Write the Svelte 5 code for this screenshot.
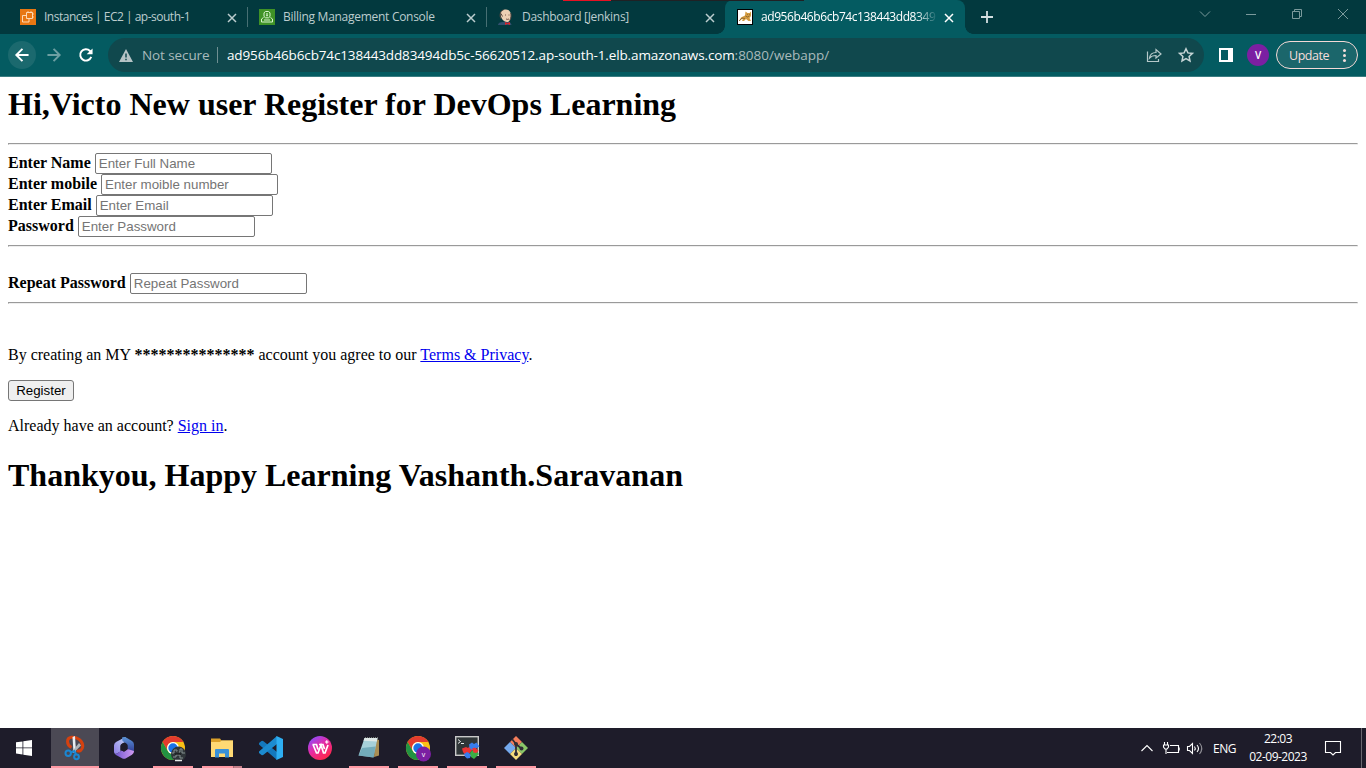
<script>
  const tabs = [
    { id: 'ec2', title: 'Instances | EC2 | ap-south-1', ls: -0.5 },
    { id: 'billing', title: 'Billing Management Console', ls: -0.28 },
    { id: 'jenkins', title: 'Dashboard [Jenkins]', ls: -0.3 },
    { id: 'tomcat', title: 'ad956b46b6cb74c138443dd8349', ls: -0.42, active: true }
  ];
  const fields = [
    { label: 'Enter Name', hint: 'Enter Full Name' },
    { label: 'Enter mobile', hint: 'Enter moible number' },
    { label: 'Enter Email', hint: 'Enter Email' },
    { label: 'Password', hint: 'Enter Password' }
  ];
  const apps = [
    { id: 'snip', open: true, current: true },
    { id: 'm365' },
    { id: 'chrome', open: true },
    { id: 'files', open: true, multi: true },
    { id: 'code' },
    { id: 'wps' },
    { id: 'notepad', open: true },
    { id: 'chromev', open: true },
    { id: 'moba', open: true },
    { id: 'git', open: true }
  ];
</script>

{#snippet chromeLogo()}
  <circle cx="12" cy="12" r="12" fill="#fbc116" />
  <path d="M1.6 6A12 12 0 0 1 22.4 6H12a6 6 0 0 0-5.2 9Z" fill="#e33b2e" />
  <path d="M1.6 6A12 12 0 0 0 12 24l5.2-9A6 6 0 0 1 6.8 15Z" fill="#229342" />
  <circle cx="12" cy="12" r="6" fill="#fff" />
  <circle cx="12" cy="12" r="4.7" fill="#1a73e8" />
{/snippet}

<div class="screen">
  <div class="strip">
    <div class="accent"><i></i><b></b></div>
    {#each tabs as tab, i}
      <div class="tab" class:active={tab.active} class:ruled={i < 2}>
        <svg class="fav" viewBox="0 0 16 16">
          {#if tab.id === 'ec2'}
            <rect width="16" height="16" fill="#e87712" />
            <path d="M6.500 3.500h6v6h-6zM8 2.200v1.300M11 2.200v1.300M12.500 5h1.300M12.500 8h1.300M6.500 6.500h-4v6.500h6.500v-3.500" fill="none" stroke="#ffe3c4" stroke-width=".9" />
          {:else if tab.id === 'billing'}
            <rect width="16" height="16" fill="#3f9226" />
            <path d="M5 7.500V3.800L6.500 2.500h3L11 3.800v3.700l-1.500 1.300h-3zM4.500 8.500L2.500 10v3h11v-3l-2-1.500M5 11h6" fill="none" stroke="#d9f5cf" stroke-width="1" />
            <path d="M8 4v3.500M7 5h2M7 6.500h2" fill="none" stroke="#d9f5cf" stroke-width=".7" />
          {:else if tab.id === 'jenkins'}
            <path d="M0 16c.2-2 2-3 5-3l4-.5c3 0 4 1.500 4.500 3.500z" fill="#31506f" />
            <path d="M2.500 5C2.500 2 5 .5 8 .5S13 3 13 6s-1 7-4 7-6-3-6.500-8z" fill="#edcfb4" />
            <path d="M3.500 10C1.300 8.500 1.500 2 5.500 .8M3 4.500l1.500 3M12.700 4c.6 2.500.3 5-.7 7" fill="none" stroke="#5c4a42" stroke-width="1" />
            <path d="M7 6h1M10.500 6h1M8 10q1.500 .8 3 0" stroke="#58372e" fill="none" stroke-width=".8" />
            <path d="M7 13l2.300 .9L12 13v3l-2.700-1L7 16z" fill="#d3242c" />
          {:else}
            <rect x=".5" y=".5" width="15" height="15" fill="#fff" stroke="#000" />
            <path d="M2 12l2-3.500L8 6.500l.5-4L10.500 4h2L14 2.500V7l-1.500 2 1.500 3h-2.500L9 10l-2 2H5l1-2-2 .5L3 12z" fill="#d39b3f" />
            <path d="M8.500 7l2 1 2-1M10 5.500h.8M12.300 5.500h.8M2 12l3-3 3 .5" fill="none" stroke="#75572d" stroke-width=".7" />
          {/if}
        </svg>
        <span class="title" style="letter-spacing:{tab.ls}px">{tab.title}</span>
        <svg class="x" viewBox="0 0 10 10"><path d="M1 1l8 8M9 1l-8 8" /></svg>
      </div>
    {/each}
    <svg class="plus" viewBox="0 0 12 12"><path d="M6 0v12M0 6h12" /></svg>
    <div class="winctl">
      <svg viewBox="0 0 12 12"><path d="M1 3.500l5 5 5-5" /></svg>
      <svg viewBox="0 0 12 12"><path d="M1 6.500h10" /></svg>
      <svg viewBox="0 0 12 12"><path d="M1.500 3.500h7v7h-7zM3.500 3.500v-2h7v7h-2" /></svg>
      <svg viewBox="0 0 12 12"><path d="M1 1l10 10M11 1L1 11" /></svg>
    </div>
  </div>

  <div class="toolbar">
    <div class="navbtn lit"><svg viewBox="0 0 16 16"><path d="M15.500 8H2M8.500 1L1.500 8l7 7" /></svg></div>
    <div class="navbtn dim"><svg viewBox="0 0 16 16"><path d="M.5 8H14M7.500 1l7 7-7 7" /></svg></div>
    <div class="navbtn"><svg viewBox="0 0 16 16"><path d="M14 10.200A6.500 6.500 0 1 1 12.600 3.400L14 5" /><path d="M15.500 .5v6.700H8.800z" class="solid" /></svg></div>
    <div class="omnibox">
      <svg class="warn" viewBox="0 0 14 13"><path d="M7 0l7 13H0z" fill="#b5c3c5" /><path d="M7 4.500v4M7 9.700v1.500" stroke="#10484d" stroke-width="1.500" /></svg>
      <span class="secure">Not secure</span>
      <i class="bar"></i>
      <span class="url"><span class="host">ad956b46b6cb74c138443dd83494db5c-56620512.ap-south-1.elb.amazonaws.com</span><span class="path">:8080/webapp/</span></span>
      <svg class="share" viewBox="0 0 16 16"><path d="M1.500 4.500v10h11V12M3.500 11C4 7.500 6.500 5.500 10 5.500V2.500L15 7l-5 4V8.500c-3 0-5 .8-6.500 2.500z" /></svg>
      <svg class="star" viewBox="0 0 16 16"><path d="M8 1.700l1.900 4.200 4.600.5-3.400 3.100.9 4.500-4-2.300L4 14l.9-4.500L1.500 6.400l4.600-.5z" /></svg>
    </div>
    <svg class="panel" viewBox="0 0 14 14"><path d="M0 0h14v14H0zM2 2v10h7V2z" fill="#fff" fill-rule="evenodd" /></svg>
    <div class="avatar">V</div>
    <div class="update"><span>Update</span><i></i></div>
  </div>

  <main>
    <h1 class="first">Hi,Victo New user Register for DevOps Learning</h1>
    <hr />
    {#each fields as f}
      <div class="field"><label for={f.hint}>{f.label}</label><input id={f.hint} placeholder={f.hint} /></div>
    {/each}
    <hr />
    <br />
    <div class="field"><label for="again">Repeat Password</label><input id="again" placeholder="Repeat Password" /></div>
    <hr />
    <br />
    <p class="terms">By creating an MY <b>***************</b> account you agree to our <a href="#terms">Terms &amp; Privacy</a>.</p>
    <button>Register</button>
    <p class="signin">Already have an account? <a href="#signin">Sign in</a>.</p>
    <h1 class="last">Thankyou, Happy Learning Vashanth.Saravanan</h1>
  </main>

  <footer>
    <div class="start"><svg viewBox="0 0 16 16"><path d="M0 2.300l6.500-.9v6.100H0zM7.300 1.300L16 0v7.500H7.300zM0 8.300h6.500v6.200L0 13.600zM7.300 8.300H16V16l-8.700-1.300z" fill="#fff" /></svg></div>
    {#each apps as app}
      <div class="app" class:open={app.open} class:current={app.current} class:multi={app.multi}>
        <svg viewBox="0 0 24 24">
          {#if app.id === 'snip'}
            <path d="M8.500 11.500C3.500 9 3 2 8.500 1.300c6-.8 11.500 4 11.300 9 -.2 4-3.500 5.500-6 4.200" fill="none" stroke="#d4410f" stroke-width="3" />
            <path d="M9.500 1l2.500-1 1 15.500-2.500 1.500z" fill="#e9eef2" />
            <path d="M16 7l2 2.500-7.500 7.500-1-2z" fill="#aeb4b9" />
            <circle cx="5.200" cy="17.300" r="2.700" fill="none" stroke="#1b87d2" stroke-width="2" />
            <circle cx="13.500" cy="20.800" r="2.400" fill="none" stroke="#1b87d2" stroke-width="2" />
            <path d="M7.500 16.500l4-1.500 1.500 3.500" fill="none" stroke="#1b87d2" stroke-width="2" />
          {:else if app.id === 'm365'}
            <defs>
              <linearGradient id="ma" x1="0" y1="1" x2="1" y2="0"><stop stop-color="#8f7ee8" /><stop offset="1" stop-color="#c3d6f5" /></linearGradient>
              <linearGradient id="mb" x1="0" y1="0" x2="0" y2="1"><stop stop-color="#5a93d8" /><stop offset="1" stop-color="#313a92" /></linearGradient>
              <linearGradient id="mc" x1="0" y1="0" x2="1" y2="0"><stop stop-color="#6c55cf" /><stop offset="1" stop-color="#d29af0" /></linearGradient>
            </defs>
            <path d="M13.500 1L4 6Q2 7.200 2 9.500V16q0 2 2 2l4.500-2.500V10q0-1.500 1.500-2.300L14 5.500z" fill="url(#ma)" />
            <path d="M10 1.500q2.500-1 5 .5l5 3q2 1.200 2 3.500v8L15.500 13V9.500q0-1.500-1.500-2.300L10.500 5z" fill="url(#mb)" />
            <path d="M2.500 17.500q1 1 2.500 0l4.500-3 2.500 1 3.500-2.500 6.500 2q0 2.500-2 3.700l-6 3.500q-2 1.200-4 0l-6-3.200z" fill="url(#mc)" />
            <path d="M8.500 10q0-1.500 1.500-2.300L12 6.700l2.500 1.300q1 .7 1 2v3.500L12 15.700l-3.500-1.900z" fill="#1e1c2a" />
          {:else if app.id === 'chrome'}
            {@render chromeLogo()}
            <circle cx="17.500" cy="18" r="7.500" fill="#30363a" />
            <path d="M11 17h2v-3h3v2h3v-3h2v4h3M12 21h3v-2h4v3h3" fill="none" stroke="#84908f" stroke-width="1" />
            <path d="M14 18h6M17 15v2" fill="none" stroke="#111" />
            <path d="M14 24.500h7" stroke="#e4e7e7" stroke-width="1.500" />
          {:else if app.id === 'files'}
            <path d="M1 2.500h9l1.500 2H23V21H1z" fill="#dca12a" />
            <path d="M1 6h9l1.500-1.500H23V21H1z" fill="#ffd974" />
            <path d="M5 21.500V14q0-1 1-1h12q1 0 1 1v7.500h-4V17.500H9v4z" fill="#3a91d8" />
          {:else if app.id === 'code'}
            <path d="M0 7l2.500-2Q3.500 4.500 4.500 5.300L18 16v8L0 8.500z" fill="#1478bd" />
            <path d="M0 17l2.500 2q1 .5 2-.3L18 8V0L0 15.500z" fill="#1c8bd0" />
            <path d="M17.500 0L24 3v18l-6.500 3z" fill="#2eaef2" />
          {:else if app.id === 'wps'}
            <defs><linearGradient id="wpsg" x1="0" y1="0" x2=".7" y2="1"><stop offset=".1" stop-color="#8c4dff" /><stop offset=".5" stop-color="#e42aa7" /><stop offset="1" stop-color="#ff2747" /></linearGradient></defs>
            <circle cx="12" cy="12" r="12" fill="url(#wpsg)" />
            <path d="M4.500 8.500h4l1.500 5M5 8.500l3.500 8.500h1.500L13 9l2.500 8H17l3-8M11 8.500h4l1.500 4.500" fill="none" stroke="#fff" stroke-width="1.700" />
            <path d="M17 6h3.600M18.800 4.200v3.600" fill="none" stroke="#fff" stroke-width="1.200" />
          {:else if app.id === 'notepad'}
            <path d="M18 3l4 1v15.500l-5 1.500z" fill="#a98e54" />
            <path d="M7.500 2h13l-4 19.500L1.500 19.500z" fill="#a7d1da" />
            <path d="M7.500 2h13l-.7 3.500-13.300-.7z" fill="#dfe9e8" />
            <path d="M5 12l13.500-1.500-2 11L1.500 19.500z" fill="#5798ab" opacity=".65" />
            <path d="M8 1.500h13" stroke="#747977" stroke-dasharray="1 1" />
          {:else if app.id === 'chromev'}
            {@render chromeLogo()}
            <circle cx="17.500" cy="18" r="7.500" fill="#7b1fa2" />
            <text x="17.500" y="20.500" text-anchor="middle" font-size="7" fill="#fff" font-family="Open Sans, sans-serif">v</text>
          {:else if app.id === 'moba'}
            <rect x=".7" y=".7" width="22.600" height="18.600" fill="#303638" stroke="#c8c8c8" stroke-width="1.400" />
            <path d="M3 3.500L5.500 5.500 3 7.500M6 7.500h3" fill="none" stroke="#fff" stroke-width=".9" />
            <path d="M7 12.500l4-1.500 2 1 2-2 3 3-4 5-4 1-2-3z" fill="#ee3434" />
            <path d="M14 8.500l3-2 2 1.500 2.500-1.500 3 4-3.500 2-1 2-3-.5-2.500-2z" fill="#387ded" />
            <path d="M9 18l3-2 2 1 2 2-1 3-3 .5-2-2z" fill="#387ded" />
            <path d="M15 17l2-2.500 3-.5 4 4-2.500 2.500-2.500 2.500-3-2z" fill="#3bae45" />
            <path d="M17 12.500l3-1 3.500 3-2 2.500-3-.5z" fill="#ee3434" />
          {:else}
            <path d="M12 0l6 6-6 6-6-6z" fill="#f47d5b" />
            <path d="M6 6l6 6-6 6-6-6z" fill="#74a9ee" />
            <path d="M18 6l6 6-6 6-6-6z" fill="#8ac668" />
            <path d="M12 12l6 6-6 6-6-6z" fill="#f5dc7c" />
            <path d="M8 3l4 5v12M12 8l6 5" fill="none" stroke="#302d36" stroke-width="1.800" />
            <circle cx="12" cy="8" r="2" fill="#302d36" /><circle cx="12" cy="18" r="2" fill="#302d36" /><circle cx="17.500" cy="12.500" r="2" fill="#302d36" />
          {/if}
        </svg>
      </div>
    {/each}
    <div class="tray">
      <svg class="caret" viewBox="0 0 12 8"><path d="M.5 7L6 1.500 11.500 7" /></svg>
      <svg class="batt" viewBox="0 0 17 13"><path d="M7 3.500h8.500v7H4M16.200 5.500v3M1.500 0v3M4.500 0v3M.5 3h5v2l-1.500 2H2L.5 5zM3 7v5" /></svg>
      <svg class="vol" viewBox="0 0 17 13"><path d="M.5 4.500h2l3-3v10l-3-3h-2zM7.500 4.500q1.500 2 0 4M10 3q3 3.500 0 7" /><path d="M12.500 1q4.500 5.500 0 11" opacity=".5" /></svg>
      <span class="lang">ENG</span>
      <div class="clock"><span>22:03</span><span>02-09-2023</span></div>
      <svg class="note" viewBox="0 0 16 16"><path d="M.5 1.500h15v11h-5L8 15l-2.500-2.500h-5z" /></svg>
      <i class="desk"></i>
    </div>
  </footer>
</div>

<style>
  :global(body) { margin: 0; overflow: hidden; background: #fff; }
  .screen { width: 1366px; height: 768px; display: flex; flex-direction: column; background: #fff; overflow: hidden; font-family: "Open Sans", sans-serif; }
  svg { display: block; flex: none; overflow: visible; }

  .strip { position: relative; height: 34px; flex: none; display: flex; background: #02393e; padding-left: 9px; box-sizing: border-box; }
  .accent { position: absolute; left: 563px; top: 0; display: flex; z-index: 2; height: 1px; }
  .accent i { width: 48px; background: #e81123; }
  .accent b { width: 193px; background: #202124; }
  .tab { position: relative; width: 239px; height: 34px; box-sizing: border-box; display: flex; align-items: center; padding: 0 11px; color: #bccdce; font-size: 12px; }
  .tab.ruled::after { content: ''; position: absolute; right: 0; top: 7px; width: 1px; height: 20px; background: #476f73; }
  .tab.active { width: 240px; margin-left: -1px; padding-left: 12px; background: #045b61; color: #fff; border-radius: 8px 8px 0 0; }
  .tab.active::before, .tab.active::after { content: ''; position: absolute; bottom: 0; width: 8px; height: 8px; }
  .tab.active::before { left: -8px; background: radial-gradient(circle at 0 0, transparent 7.5px, #045b61 8px); }
  .tab.active::after { right: -8px; background: radial-gradient(circle at 100% 0, transparent 7.5px, #045b61 8px); }
  .fav { width: 16px; height: 16px; margin-right: 8px; }
  .title { width: 177px; height: 18px; line-height: 18px; white-space: nowrap; }
  .active .title { -webkit-mask-image: linear-gradient(90deg, #000 155px, transparent 177px); }
  .x { width: 10px; height: 10px; margin-left: 6.500px; margin-top: 1px; }
  .x path { stroke: currentColor; stroke-width: 1.500; fill: none; }
  .plus { width: 12px; height: 12px; margin: 11px 0 0 16px; }
  .plus path { stroke: #d3dfe0; stroke-width: 1.800; }
  .winctl { margin-left: auto; display: flex; gap: 34px; padding: 8px 17px 0 0; }
  .winctl svg { width: 12px; height: 12px; }
  .winctl path { fill: none; stroke: #7b9a9c; stroke-width: 1; }

  .toolbar { height: 43px; flex: none; box-sizing: border-box; border-bottom: 1px solid #3b7d82; background: #045b61; display: flex; align-items: center; padding: 0 8px; }
  .navbtn { width: 28px; height: 28px; border-radius: 50%; margin-right: 4px; display: flex; align-items: center; justify-content: center; color: #fff; }
  .navbtn svg { width: 14px; height: 14px; }
  .navbtn path { fill: none; stroke: currentColor; stroke-width: 2.200; }
  .navbtn .solid { fill: currentColor; stroke: none; }
  .lit { background: #1b696e; }
  .navbtn.dim { color: #6d9fa2; }
  .omnibox { width: 1096px; height: 34px; margin-left: 4px; box-sizing: border-box; border-radius: 17px; background: #10484d; display: flex; align-items: center; padding: 0 10px 0 11px; white-space: nowrap; }
  .warn { width: 14px; height: 13px; margin-right: 9px; }
  .secure { width: 75px; font-size: 13.500px; letter-spacing: -0.1px; color: #a9babc; }
  .bar { width: 1px; height: 16px; background: #6f8f92; margin-right: 9px; }
  .url { font-size: 13.500px; color: #a9babc; flex: 1; }
  .host { color: #fff; letter-spacing: -0.13px; }
  .share { width: 16px; height: 16px; margin-right: 16px; }
  .star { width: 16px; height: 16px; }
  .share path { fill: none; stroke: #b5c8c9; stroke-width: 1.200; }
  .star path { fill: none; stroke: #c5d4d5; stroke-width: 1.500; }
  .panel { width: 14px; height: 14px; margin-left: 15px; }
  .avatar { width: 22px; height: 22px; border-radius: 50%; background: #7b1fa2; color: #fff; font-size: 10px; font-weight: 600; line-height: 22px; text-align: center; margin-left: 14px; }
  .update { width: 82px; height: 28px; box-sizing: border-box; border: 1px solid #f4d9d6; border-radius: 14px; margin-left: 7px; padding: 0 11px 0 12px; display: flex; align-items: center; justify-content: space-between; color: #f5dedb; font-size: 12.500px; letter-spacing: -0.45px; background: #1b666b; }
  .update i { width: 3px; height: 3px; border-radius: 50%; background: #f5dedb; box-shadow: 0 -5px #f5dedb, 0 5px #f5dedb; }

  main { flex: 1; min-height: 0; padding: 8px; font: 16px/18px "Liberation Serif", serif; color: #000; overflow: hidden; }
  h1 { font-size: 32px; line-height: 37px; font-weight: bold; white-space: nowrap; }
  .first { margin: 0 0 20px; padding-top: 1px; }
  .last { margin: 22px 0 0; }
  hr { margin: 8px 0; border-width: 1px; }
  .field { display: flex; height: 21px; align-items: center; gap: 4px; font-weight: bold; }
  label { padding-bottom: 2px; }
  input { width: 177px; height: 21px; box-sizing: border-box; border: 1px solid #767676; border-radius: 2px; padding: 1px 3px; margin: 0; font: 13.333px "Liberation Sans", sans-serif; }
  input::placeholder { color: #757575; }
  p { margin: 16px 0; }
  a { color: #0000ee; }
  button { display: block; width: 66px; height: 21px; box-sizing: border-box; border: 1px solid #767676; border-radius: 3px; background: #efefef; padding: 0; font: 13.333px "Liberation Sans", sans-serif; color: #000; }

  footer { height: 40px; flex: none; display: flex; background: #1e1c2a; color: #fff; }
  .start { width: 48px; margin-right: 3px; display: flex; align-items: center; justify-content: center; }
  .start svg { width: 16px; height: 16px; }
  .app { width: 48px; margin-right: 1px; display: flex; align-items: center; justify-content: center; position: relative; }
  .app svg { width: 24px; height: 24px; }
  .open::after { content: ''; position: absolute; left: 4px; right: 4px; bottom: 0; height: 2px; background: #ff99a4; }
  .current { background: #4b4954; }
  .current::after { left: 0; right: 0; }
  .multi::after { background: linear-gradient(90deg, #ff99a4 31px, #a66a74 31px 32px, #c47e89 32px); }
  .tray { margin-left: auto; display: flex; align-items: center; }
  .tray path { fill: none; stroke: #fff; stroke-width: 1.100; }
  .caret { width: 12px; height: 8px; margin-right: 10px; }
  .batt { width: 17px; height: 13px; margin-right: 7px; }
  .vol { width: 17px; height: 13px; margin-right: 9px; }
  .lang { width: 23px; font-size: 12px; letter-spacing: -0.5px; white-space: nowrap; margin-right: 12px; }
  .clock { width: 60px; display: flex; flex-direction: column; align-items: center; font-size: 12px; line-height: 18px; letter-spacing: -0.5px; white-space: nowrap; margin-right: 17px; }
  .note { width: 16px; height: 16px; margin-right: 20px; }
  .desk { width: 4px; height: 40px; border-left: 1px solid #69676f; }
</style>
